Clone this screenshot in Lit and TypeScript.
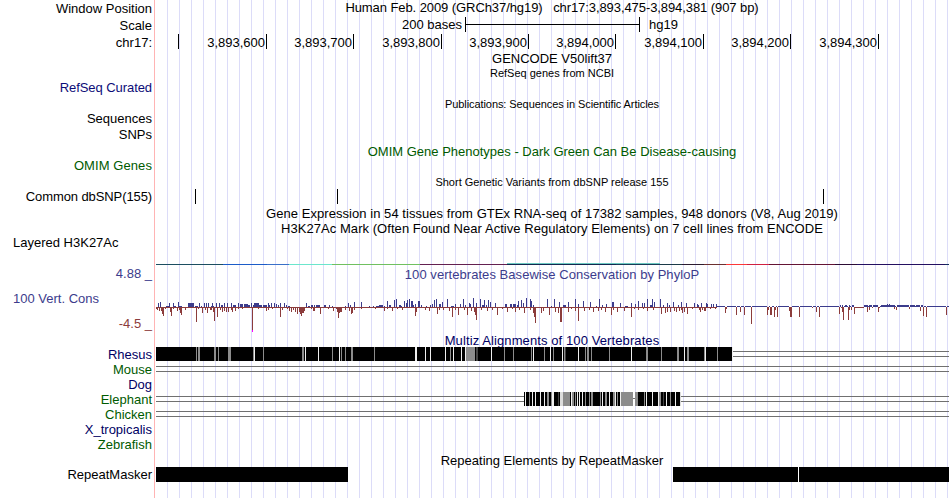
import { LitElement, html, svg, css, nothing } from 'lit';
import { customElement, property } from 'lit/decorators.js';

const LEFT = 155;
const START = 156;
const END = 949;

// [x, height, width = 1]
type Bar = [number, number, number?];

const UPS: Bar[] = [
  [158, 4], [160, 5], [166, 1, 3], [169, 4], [173, 4], [174, 1, 2], [178, 5],
  [179, 1, 3], [188, 4, 2], [190, 4], [191, 4, 3], [195, 1, 3], [199, 4],
  [201, 1], [204, 4], [206, 4],
  [208, 4], [211, 1], [212, 4], [213, 1], [216, 4], [219, 4], [221, 2, 2],
  [224, 4], [227, 4], [231, 4], [233, 2, 3], [238, 4], [240, 3, 3], [244, 3, 4],
  [248, 2, 2], [251, 4], [253, 2], [254, 4, 5], [259, 2, 3], [263, 2, 4],
  [268, 4], [269, 2], [271, 4], [274, 4], [276, 3], [278, 2], [280, 4],
  [284, 4], [286, 2], [288, 1, 2], [306, 4], [308, 1, 2], [311, 2, 2],
  [314, 2], [316, 2, 4], [324, 2, 2], [329, 2], [332, 1], [345, 1], [348, 4],
  [350, 2], [354, 5], [361, 5], [369, 1], [373, 1], [376, 1, 3], [379, 2, 4],
  [384, 1], [387, 6], [389, 2, 2], [394, 7], [396, 8], [399, 2, 2], [401, 1],
  [404, 6], [406, 4], [407, 7], [409, 8], [411, 6, 2], [413, 2], [415, 3],
  [418, 6, 2], [421, 2], [426, 1], [430, 2], [432, 3], [434, 7], [436, 8],
  [439, 3, 2], [442, 5], [447, 8], [451, 1, 3], [455, 3], [460, 3], [463, 8],
  [465, 2], [469, 4], [470, 3], [473, 9], [476, 4], [480, 8], [482, 2, 2],
  [484, 7], [486, 2], [488, 7], [490, 5], [495, 4], [505, 3, 2], [510, 3, 2],
  [513, 3, 3], [517, 2], [518, 6], [521, 7], [523, 4], [526, 9], [530, 8],
  [531, 6], [533, 2], [547, 8], [551, 1], [554, 8], [559, 5], [563, 2, 3],
  [568, 5], [575, 8], [578, 3], [583, 6], [590, 5], [596, 1], [599, 8],
  [602, 2], [606, 3], [612, 5, 2], [620, 4], [625, 1, 3], [631, 4], [635, 3],
  [638, 6], [642, 4], [644, 4], [647, 8], [650, 2, 2], [652, 8], [654, 5],
  [660, 8], [663, 2], [667, 4], [669, 2], [673, 5], [678, 2], [681, 5],
  [686, 4], [694, 4], [697, 3], [698, 2], [701, 4], [706, 4], [707, 3],
  [711, 3], [713, 3], [716, 3], [840, 2], [842, 2], [845, 2, 2], [849, 2],
  [852, 2, 2], [864, 2, 4], [869, 2, 3], [873, 2, 5], [881, 2, 14], [887, 3],
  [889, 3], [897, 2, 12], [910, 2, 5], [916, 2, 4], [921, 2, 2],
];

const DOWNS: Bar[] = [
  [156, 2], [157, 3], [159, 4], [161, 4], [162, 7], [163, 9], [165, 2],
  [170, 5], [171, 9], [173, 2], [177, 4], [179, 3], [180, 6], [181, 8],
  [185, 3], [196, 15], [198, 2], [202, 6], [205, 3], [207, 6], [210, 3, 2],
  [213, 5], [214, 14], [217, 10], [220, 3], [222, 5], [224, 4], [226, 5],
  [228, 5], [231, 3], [232, 5], [235, 4], [238, 2], [242, 2], [252, 23],
  [258, 2], [266, 4], [268, 3], [272, 2], [280, 10], [282, 3], [287, 2],
  [289, 4], [291, 5], [293, 3], [295, 5], [297, 7], [299, 5], [300, 7],
  [301, 9], [302, 6], [303, 6], [304, 4], [311, 2], [313, 4, 2], [320, 7],
  [328, 2], [333, 4], [336, 2], [337, 5], [338, 11], [339, 6], [340, 5, 2],
  [345, 3], [349, 4], [351, 7], [352, 6], [354, 3], [361, 2], [375, 2],
  [384, 4], [387, 2], [392, 4], [397, 2], [402, 3], [415, 9], [416, 5],
  [425, 3], [429, 4], [437, 7], [439, 3], [443, 3], [449, 4], [452, 10],
  [455, 3], [458, 8], [464, 3], [467, 8], [471, 4], [474, 5], [475, 8],
  [476, 13], [481, 3], [487, 4], [492, 3], [497, 8], [502, 2], [507, 5],
  [512, 2], [515, 5], [519, 3], [524, 6], [530, 3], [533, 6], [534, 10],
  [535, 16], [541, 6], [543, 4], [549, 8], [555, 5], [558, 6], [560, 15, 2],
  [568, 5], [571, 2], [575, 4], [578, 14], [584, 4], [589, 3], [593, 5],
  [598, 4], [601, 3], [605, 5], [611, 8], [613, 3], [617, 5], [624, 4],
  [631, 10], [634, 2], [638, 3], [643, 2], [647, 4], [653, 3], [661, 7],
  [665, 6], [667, 5], [670, 5], [674, 4], [676, 5], [679, 4], [681, 3],
  [682, 6], [684, 5], [687, 7], [692, 2], [699, 3], [700, 5], [702, 3],
  [704, 4, 2], [710, 2], [715, 2], [725, 6], [726, 2], [736, 8], [740, 5],
  [744, 8], [751, 17], [767, 8], [768, 3], [770, 8, 2], [774, 10], [775, 3],
  [777, 10], [789, 4], [790, 10, 2], [799, 10], [812, 1], [816, 5],
  [819, 10], [839, 7], [841, 1], [842, 5], [843, 13], [848, 13], [849, 3],
  [851, 3], [854, 7], [855, 1, 9], [867, 5], [869, 3], [872, 1], [878, 5],
  [879, 1], [894, 2], [896, 3], [909, 2], [920, 4], [923, 9], [926, 10],
  [946, 8],
];

// after this position the conservation signal rests on the positive side
const QUIET_FROM = 717;

// [x, end, colour]
const MARK_COLOURS: [number, number, string][] = [
  [156, 223, '#1c4e60'],
  [223, 267, '#1c5cc8'],
  [267, 289, '#3a70c8'],
  [289, 332, '#6ce6cc'],
  [332, 420, '#70c060'],
  [420, 507, '#642050'],
  [507, 616, '#122850'],
  [616, 660, '#183c58'],
  [660, 682, '#1c3a48'],
  [682, 704, '#2c1c30'],
  [704, 726, '#6c3030'],
  [726, 747, '#fc3838'],
  [747, 769, '#d02040'],
  [769, 835, '#641434'],
  [835, 857, '#2c0c34'],
  [857, 945, '#241060'],
  [945, 949, '#14305c'],
];

const GREY = '#8c8c8c';
const PALE = '#f0f0f0';
const DARK = '#444';

// [x, width, colour] stripes over a solid alignment bar
type Stripe = [number, number, string];

const RHESUS: Stripe[] = [
  [196, 1, GREY], [198, 2, GREY], [214, 2, GREY], [218, 1, GREY],
  [228, 3, GREY], [253, 1, GREY], [254, 1, PALE], [263, 1, GREY],
  [302, 2, GREY], [305, 1, PALE], [318, 1, PALE], [332, 1, GREY],
  [339, 1, PALE], [341, 1, GREY], [345, 1, GREY], [351, 2, GREY],
  [374, 1, GREY], [415, 2, PALE], [425, 1, PALE], [430, 1, PALE],
  [445, 1, PALE], [450, 1, GREY], [453, 1, PALE], [461, 1, PALE],
  [465, 1, PALE], [466, 9, GREY], [476, 2, DARK], [491, 1, PALE],
  [504, 1, GREY], [513, 1, GREY], [531, 1, GREY], [533, 1, PALE],
  [544, 1, GREY], [550, 1, PALE], [553, 1, GREY], [562, 1, PALE],
  [564, 1, GREY], [565, 1, DARK], [578, 1, PALE], [585, 1, GREY],
  [587, 2, GREY], [591, 1, GREY], [609, 1, GREY], [631, 1, PALE],
  [646, 2, GREY], [661, 1, GREY], [677, 2, GREY], [684, 1, PALE],
  [687, 2, GREY], [704, 1, GREY], [705, 1, PALE], [717, 1, GREY],
  [732, 1, PALE],
];

const ELEPHANT: Stripe[] = [
  [525, 1, PALE], [529, 1, GREY], [532, 1, PALE], [535, 1, PALE],
  [540, 1, PALE], [544, 1, PALE], [547, 2, GREY], [551, 1, GREY],
  [552, 2, PALE], [558, 1, DARK], [560, 3, '#dcdcdc'], [563, 7, GREY],
  [571, 1, PALE], [572, 2, GREY], [575, 1, GREY], [577, 1, PALE],
  [579, 1, PALE], [582, 1, PALE], [585, 1, GREY], [589, 1, GREY],
  [591, 2, GREY], [600, 1, GREY], [602, 1, PALE], [605, 2, GREY],
  [609, 1, PALE], [613, 2, GREY], [615, 1, PALE], [617, 1, GREY],
  [620, 1, PALE], [621, 12, GREY], [635, 3, GREY], [644, 1, GREY],
  [646, 1, PALE], [652, 1, PALE], [658, 1, PALE], [659, 2, GREY],
  [663, 1, DARK], [666, 1, PALE], [670, 1, GREY], [675, 1, PALE],
  [680, 1, '#dcdcdc'],
];

const rect = (x: number, y: number, w: number, h: number, fill: string) =>
  svg`<rect x=${x} y=${y} width=${w} height=${h} fill=${fill}></rect>`;

const stripes = (list: Stripe[]) =>
  list.map(([x, w, fill]) => rect(x, 0, w, 14, fill));

const bars = (list: Bar[], down: boolean) =>
  list
    .map(([x, h, w = 1]) => `M${x} ${down ? 41 : 41 - h}h${w}v${h}h${-w}z`)
    .join('');

const conservation = () => {
  const taken = new Set<number>();
  DOWNS.forEach(([x, , w = 1]) => {
    for (let i = 0; i < w; i += 1) taken.add(x + i);
  });
  const quiet: Bar[] = [];
  for (let x = QUIET_FROM; x < END; x += 1) {
    if (!taken.has(x)) quiet.push([x, 1]);
  }
  return svg`
    ${rect(START, 41, QUIET_FROM - START, 1, '#8c3c3c')}
    <path d=${bars(DOWNS, true)} fill="#8c3c3c"></path>
    <path d=${bars([...UPS, ...quiet], false)} fill="#3c3c8c"></path>
    ${rect(252, 64, 1, 2, '#f0f')}
  `;
};

const unaligned = (from = START, to = END) => svg`
  ${rect(from, 4, to - from, 1, '#707070')}
  ${rect(from, 9, to - from, 1, '#707070')}
`;

const rhesus = () => svg`
  ${rect(START, 0, 576, 14, '#000')}
  ${stripes(RHESUS)}
  ${unaligned(733)}
`;

const elephant = () => svg`
  ${unaligned(START, 524)}
  ${unaligned(681)}
  ${rect(524, 0, 109, 14, '#000')}
  ${rect(633, 6, 2, 1, '#707070')}
  ${rect(635, 0, 45, 14, '#000')}
  ${stripes(ELEPHANT)}
`;

const marks = () => svg`
  ${MARK_COLOURS.map(([x, end, fill]) => rect(x, 29, end - x, 1, fill))}
  ${rect(507, 28, 153, 1, '#6cc8c0')}
`;

@customElement('track-row')
export class TrackRow extends LitElement {
  @property({ type: Number }) height = 15;

  @property({ type: String }) label = '';

  @property({ type: String }) heading = '';

  @property({ attribute: false }) drawing: unknown = nothing;

  render() {
    return html`
      <div class="row" style="height: ${this.height}px">
        <div class="label"><slot name="label">${this.label}</slot></div>
        <div class="track">
          ${this.drawing === nothing
            ? nothing
            : html`<svg
                width="795"
                height=${this.height}
                viewBox="${LEFT} 0 795 ${this.height}"
                shape-rendering="crispEdges"
              >
                ${this.drawing}
              </svg>`}
          ${this.heading
            ? html`<div class="heading">${this.heading}</div>`
            : nothing}
          <slot></slot>
        </div>
      </div>
    `;
  }

  static styles = css`
    :host {
      display: block;
    }
    .row {
      display: grid;
      grid-template-columns: 155px 795px;
    }
    .label {
      box-sizing: border-box;
      padding: var(--label-top, 0) 3px 0 0;
      text-align: right;
      white-space: pre;
      color: var(--label-color, inherit);
      letter-spacing: var(--label-spacing, normal);
    }
    .track {
      display: grid;
      min-width: 0;
    }
    .track > * {
      grid-area: 1 / 1;
    }
    svg {
      display: block;
    }
    .heading {
      padding: var(--heading-top, 0) 1px 0 0;
      text-align: center;
      white-space: pre;
      color: var(--heading-color, inherit);
      font-size: var(--heading-size, inherit);
      letter-spacing: var(--heading-spacing, normal);
    }
  `;
}

@customElement('app-root')
export class AppRoot extends LitElement {
  // [label, width] of each ruler step, the tick stands at its right edge
  ruler: [string, number][] = [
    ['', 24],
    ['3,893,600', 88],
    ['3,893,700', 87],
    ['3,893,800', 88],
    ['3,893,900', 87],
    ['3,894,000', 87],
    ['3,894,100', 88],
    ['3,894,200', 87],
    ['3,894,300', 88],
  ];

  render() {
    return html`
      <track-row
        class="drop tight"
        height="17"
        label="Window Position"
        heading="Human Feb. 2009 (GRCh37/hg19)   chr17:3,893,475-3,894,381 (907 bp)"
      ></track-row>
      <track-row class="drop" height="17" label="Scale">
        <div class="scale">
          <span class="bases">200 bases</span>
          <span class="span"><i></i></span>
          <span>hg19</span>
        </div>
      </track-row>
      <track-row class="drop" height="17" label="chr17:">
        <div class="ruler">
          ${this.ruler.map(
            ([text, width]) =>
              html`<span class="step" style="width: ${width}px">${text}</span>`
          )}
        </div>
      </track-row>
      <track-row height="14" heading="GENCODE V50lift37"></track-row>
      <track-row
        class="small"
        height="15"
        heading="RefSeq genes from NCBI"
      ></track-row>
      <track-row class="refseq" height="16" label="RefSeq Curated"></track-row>
      <track-row
        class="small tight"
        height="15"
        heading="Publications: Sequences in Scientific Articles"
      ></track-row>
      <track-row height="16" label="Sequences"></track-row>
      <track-row height="17" label="SNPs"></track-row>
      <track-row
        class="green"
        height="14"
        heading="OMIM Gene Phenotypes - Dark Green Can Be Disease-causing"
      ></track-row>
      <track-row
        class="green omim"
        height="16"
        label="OMIM Genes"
      ></track-row>
      <track-row
        class="small"
        height="15"
        heading="Short Genetic Variants from dbSNP release 155"
      ></track-row>
      <track-row
        class="snp"
        height="17"
        label="Common dbSNP(155)"
        .drawing=${[195, 337, 823].map(x => rect(x, 0, 1, 15, '#000'))}
      ></track-row>
      <track-row
        class="loose"
        height="15"
        heading="Gene Expression in 54 tissues from GTEx RNA-seq of 17382 samples, 948 donors (V8, Aug 2019)"
      ></track-row>
      <track-row
        class="loose"
        height="14"
        heading="H3K27Ac Mark (Often Found Near Active Regulatory Elements) on 7 cell lines from ENCODE"
      ></track-row>
      <track-row height="31" .drawing=${marks()}>
        <div slot="label" class="name">Layered H3K27Ac</div>
      </track-row>
      <track-row
        class="phylop loose"
        height="67"
        heading="100 vertebrates Basewise Conservation by PhyloP"
        .drawing=${conservation()}
      >
        <div slot="label" class="limits">
          <span>4.88 _</span>
          <span class="name">100 Vert. Cons</span>
          <span class="low">-4.5 _</span>
        </div>
      </track-row>
      <track-row
        class="navy multiz"
        height="14"
        heading="Multiz Alignments of 100 Vertebrates"
      ></track-row>
      <track-row class="navy" label="Rhesus" .drawing=${rhesus()}></track-row>
      <track-row class="green" label="Mouse" .drawing=${unaligned()}></track-row>
      <track-row class="navy" label="Dog"></track-row>
      <track-row
        class="green"
        label="Elephant"
        .drawing=${elephant()}
      ></track-row>
      <track-row
        class="green"
        label="Chicken"
        .drawing=${unaligned()}
      ></track-row>
      <track-row class="navy" label="X_tropicalis"></track-row>
      <track-row class="green" height="16" label="Zebrafish"></track-row>
      <track-row
        height="14"
        heading="Repeating Elements by RepeatMasker"
      ></track-row>
      <track-row
        height="31"
        label="RepeatMasker"
        .drawing=${[
          rect(START, 0, 192, 15, '#000'),
          rect(673, 0, 125, 15, '#000'),
          rect(798, 0, 1, 15, '#fff'),
          rect(799, 0, 150, 15, '#000'),
        ]}
      ></track-row>
    `;
  }

  static styles = css`
    :host {
      display: block;
      width: 950px;
      height: 498px;
      overflow: hidden;
      font: 13px/15px 'Liberation Sans', Arial, sans-serif;
      color: #000;
      background-color: #fff;
      background-image: linear-gradient(#ffb4b4, #ffb4b4),
        linear-gradient(#fff, #fff),
        linear-gradient(90deg, #dcdcf8 1px, transparent 1px);
      background-position: 154px 0, 0 0, 11px 0;
      background-size: 1px 100%, 160px 100%, 12px 100%;
      background-repeat: no-repeat, no-repeat, repeat-x;
    }
    .drop {
      --label-top: 1px;
    }
    .small {
      --heading-size: 11px;
      --heading-top: 1px;
    }
    .tight {
      --heading-spacing: -0.08px;
    }
    .loose {
      --heading-spacing: 0.05px;
    }
    .refseq {
      --label-color: #0c0c78;
      --label-spacing: -0.07px;
    }
    .green {
      --label-color: #005a00;
      --heading-color: #005a00;
    }
    .omim {
      --label-spacing: 0.08px;
    }
    .snp {
      --label-spacing: -0.1px;
    }
    .navy {
      --label-color: #000064;
      --heading-color: #000064;
    }
    .multiz {
      --heading-spacing: 0.1px;
    }
    .phylop {
      --label-color: #3c3c8c;
      --heading-color: #3c3c8c;
      --heading-top: 1px;
    }
    .scale {
      display: flex;
    }
    .bases {
      width: 307px;
      padding-right: 3px;
      text-align: right;
    }
    .span {
      display: flex;
      align-items: center;
      box-sizing: border-box;
      width: 175px;
      height: 15px;
      margin-right: 9px;
      border: solid #000;
      border-width: 0 1px;
    }
    .span i {
      flex: 1;
      height: 1px;
      background: #000;
    }
    .ruler {
      display: flex;
      height: 15px;
    }
    .step {
      box-sizing: border-box;
      padding: 1px 1px 0 0;
      border-right: 1px solid #000;
      text-align: right;
    }
    .name {
      padding-left: 13px;
      text-align: left;
    }
    .limits {
      display: flex;
      flex-direction: column;
      gap: 10px;
    }
    .limits .name {
      align-self: flex-start;
    }
    .low {
      color: #8c3c3c;
    }
  `;
}
